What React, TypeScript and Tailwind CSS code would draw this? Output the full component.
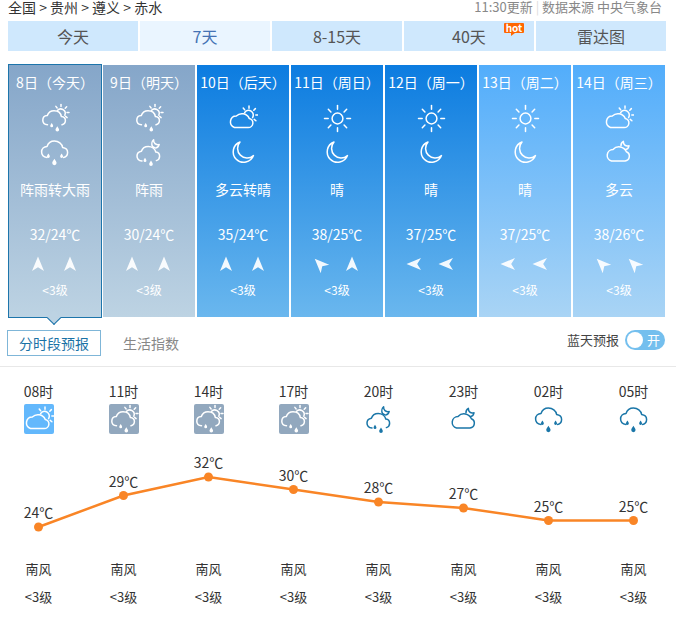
import React from "react";

const FONT = "font-['Noto_Sans_CJK_SC','Liberation_Sans',sans-serif]";

type IconKind = "partly" | "shower" | "showerNight" | "rain" | "sun" | "moon" | "cloudNight";

function Rays({ cx, cy, r1, r2, angles }: { cx: number; cy: number; r1: number; r2: number; angles: number[] }) {
  return (
    <>
      {angles.map((a) => {
        const t = (a * Math.PI) / 180;
        return (
          <line
            key={a}
            x1={cx + r1 * Math.cos(t)}
            y1={cy + r1 * Math.sin(t)}
            x2={cx + r2 * Math.cos(t)}
            y2={cy + r2 * Math.sin(t)}
          />
        );
      })}
    </>
  );
}

function Drop({ x, y, s = 1 }: { x: number; y: number; s?: number }) {
  return (
    <path
      d={`M${x} ${y - 3 * s} C${x + 0.8 * s} ${y - 1.4 * s} ${x + 1.8 * s} ${y - 0.6 * s} ${x + 1.8 * s} ${y + 0.6 * s} A${1.8 * s} ${1.8 * s} 0 0 1 ${x - 1.8 * s} ${y + 0.6 * s} C${x - 1.8 * s} ${y - 0.6 * s} ${x - 0.8 * s} ${y - 1.4 * s} ${x} ${y - 3 * s}Z`}
      fill="currentColor"
      stroke="none"
    />
  );
}

function WeatherIcon({ kind }: { kind: IconKind }) {
  return (
    <svg
      width="30"
      height="30"
      viewBox="0 0 30 30"
      fill="none"
      stroke="currentColor"
      strokeWidth="1.5"
      strokeLinecap="round"
      strokeLinejoin="round"
      className="block shrink-0"
    >
      {kind === "sun" && (
        <>
          <circle cx="15.5" cy="15.5" r="5.4" />
          <Rays cx={15.5} cy={15.5} r1={9.3} r2={13} angles={[0, 45, 90, 135, 180, 225, 270, 315]} />
        </>
      )}
      {kind === "moon" && <path d="M12 5 A10.5 10.5 0 1 0 25.5 18.6 A9.6 9.6 0 0 1 12 5Z" />}
      {kind === "partly" && (
        <>
          <path d="M6.5 24.5 H20 A4.6 4.6 0 0 0 21.2 15.4 A8 8 0 0 0 8.3 13 A5.9 5.9 0 0 0 6.5 24.5Z" />
          <path d="M16.6 9.6 A4.6 4.6 0 0 1 24.6 14.6" />
          <Rays cx={21} cy={12} r1={6.8} r2={9} angles={[-90, -130, -45, 0, 40]} />
        </>
      )}
      {kind === "shower" && (
        <>
          <path d="M7.5 21.8 C4.6 21.6 2.8 19.6 2.8 17.2 C2.8 14.6 4.8 12.8 7.2 12.6 C8.4 9.6 11 7.8 14 7.8 C18 7.8 20.8 10.4 21.4 13.6 C23.8 13.8 25.4 15.6 25.4 17.6 C25.4 19.8 24 21.2 22 21.7" />
          <path d="M17.4 7.6 A4.4 4.4 0 0 1 24.8 12.2" />
          <Rays cx={21} cy={9.5} r1={6} r2={8} angles={[-90, -130, -45, 0, 40]} />
          <Drop x={11.7} y={22.4} s={0.8} />
          <Drop x={17.3} y={26.2} />
        </>
      )}
      {kind === "showerNight" && (
        <>
          <path d="M8 24 C5 23.8 3 21.8 3 19 C3 16.6 4.8 14.6 7.4 14.2 C8.4 11.2 11 9.4 14.2 9.4 C17.8 9.4 21 11.8 21.8 15 C24 15.2 25.6 17 25.6 19.2 C25.6 21.4 24.2 23 22.4 23.6" />
          <path d="M19.6 2.8 C19.4 6 21.6 8.4 25.2 7.4 C24.6 10 22.6 11.2 20.8 10.8 C20 10.6 19 10 18.4 9.4 C17.4 7.4 17.8 4.4 19.6 2.8Z" fill="none" />
          <Drop x={11} y={23.2} s={0.8} />
          <Drop x={17} y={26.6} />
        </>
      )}
      {kind === "rain" && (
        <>
          <path d="M7 20.5 C3.4 20 1.6 17.6 1.6 15 C1.6 11.8 4 9.6 7 9.4 C8.2 6 11 4 14.4 4 C18.6 4 22 6.8 22.6 10.4 C25.6 10.8 27.6 12.8 27.6 15.4 C27.6 18 26 19.8 23.6 20.4" />
          <Drop x={8.4} y={19} s={0.8} />
          <Drop x={21.6} y={19} s={0.8} />
          <Drop x={14.4} y={25.4} s={1.2} />
        </>
      )}
      {kind === "cloudNight" && (
        <>
          <path d="M7.5 24 H21 A4.8 4.8 0 0 0 22.4 14.8 A8 8 0 0 0 9 12.6 A5.8 5.8 0 0 0 7.5 24Z" />
          <path d="M19.4 4.4 C19.2 7.6 21.6 9.8 25 8.8 C24.6 11 23.2 12.2 21.6 12.6 M19.4 4.4 C17.6 5.6 16.8 7.4 17 8.8" />
        </>
      )}
    </svg>
  );
}

function WindArrow({ rot }: { rot: number }) {
  return (
    <svg width="14" height="16" viewBox="0 0 14 16" className="block" style={{ transform: `rotate(${rot}deg)` }}>
      <path d="M7 0.5 L13 15 L7 11.2 L1 15 Z" fill="#ffffff" fillOpacity="0.92" />
    </svg>
  );
}

type Day = {
  date: string;
  i1: IconKind;
  i2: IconKind;
  cond: string;
  temp: string;
  w1: number;
  w2: number;
  bg: string;
  active?: boolean;
};

const GRAY = "bg-[linear-gradient(#85a6c9,#bdd3e3)]";
const BLUE = "bg-[linear-gradient(#0c7ce0,#6ab7ee)]";
const LIGHT = "bg-[linear-gradient(#52adfb,#a9d4f5)]";

const days: Day[] = [
  { date: "8日（今天）", i1: "shower", i2: "rain", cond: "阵雨转大雨", temp: "32/24℃", w1: 0, w2: 0, bg: GRAY, active: true },
  { date: "9日（明天）", i1: "shower", i2: "showerNight", cond: "阵雨", temp: "30/24℃", w1: 0, w2: 0, bg: GRAY },
  { date: "10日（后天）", i1: "partly", i2: "moon", cond: "多云转晴", temp: "35/24℃", w1: 0, w2: 0, bg: BLUE },
  { date: "11日（周日）", i1: "sun", i2: "moon", cond: "晴", temp: "38/25℃", w1: -45, w2: 0, bg: BLUE },
  { date: "12日（周一）", i1: "sun", i2: "moon", cond: "晴", temp: "37/25℃", w1: -90, w2: -90, bg: BLUE },
  { date: "13日（周二）", i1: "sun", i2: "moon", cond: "晴", temp: "37/25℃", w1: -90, w2: -90, bg: LIGHT },
  { date: "14日（周三）", i1: "partly", i2: "cloudNight", cond: "多云", temp: "38/26℃", w1: -45, w2: -45, bg: LIGHT },
];

const tabs = ["今天", "7天", "8-15天", "40天", "雷达图"];

const hours: { t: string; icon: IconKind; box?: string; temp: string; y: number }[] = [
  { t: "08时", icon: "partly", box: "bg-[#63b8fc] text-white", temp: "24℃", y: 87 },
  { t: "11时", icon: "shower", box: "bg-[#92a8be] text-white", temp: "29℃", y: 55.5 },
  { t: "14时", icon: "shower", box: "bg-[#92a8be] text-white", temp: "32℃", y: 37 },
  { t: "17时", icon: "shower", box: "bg-[#92a8be] text-white", temp: "30℃", y: 49.5 },
  { t: "20时", icon: "showerNight", temp: "28℃", y: 62 },
  { t: "23时", icon: "cloudNight", temp: "27℃", y: 68 },
  { t: "02时", icon: "rain", temp: "25℃", y: 80.5 },
  { t: "05时", icon: "rain", temp: "25℃", y: 80.5 },
];

function DayCard({ d }: { d: Day }) {
  return (
    <li
      className={`relative flex flex-col items-center text-white ${d.bg} ${
        d.active ? "w-[94px] h-[254px] -mt-px mr-[-1px] border border-[#1d75ab] pt-0" : "w-[92px] h-[252px]"
      }`}
    >
      <div className="h-[34px] w-full text-center text-[14px] leading-[34px] whitespace-nowrap">{d.date}</div>
      <div className="mt-[4px]">
        <WeatherIcon kind={d.i1} />
      </div>
      <div className="mt-[4px]">
        <WeatherIcon kind={d.i2} />
      </div>
      <div className="mt-[12px] h-[20px] text-[14px] leading-[20px] whitespace-nowrap">{d.cond}</div>
      <div className="mt-[25px] h-[20px] text-[14px] leading-[20px] whitespace-nowrap">{d.temp}</div>
      <div className="mt-[12px] flex h-[16px] w-[46px] justify-between -translate-x-[1px]">
        <WindArrow rot={d.w1} />
        <WindArrow rot={d.w2} />
      </div>
      <div className="mt-[9px] h-[18px] text-[12px] leading-[18px] whitespace-nowrap">&lt;3级</div>
      {d.active && (
        <span className="absolute left-[40px] bottom-[-6px] h-[10px] w-[10px] rotate-45 border-r border-b border-[#1d75ab] bg-[#bdd3e3]" />
      )}
    </li>
  );
}

export default function App() {
  const points = hours.map((h, i) => `${38.5 + i * 85},${h.y}`).join(" ");
  return (
    <div className={`relative h-[628px] w-[676px] overflow-hidden bg-white text-[#333] ${FONT}`}>
      <div className="flex h-[21px] items-start justify-between pl-[8px] pr-[14px]">
        <div className="text-[14px] leading-[14px] whitespace-pre">全国 &gt; 贵州 &gt; 遵义 &gt; 赤水</div>
        <div className="text-[13px] leading-[14px] text-[#888] whitespace-pre">
          11:30更新 <span className="text-[#ddd]">|</span> 数据来源 中央气象台
        </div>
      </div>

      <ul className="flex gap-[2px] pl-[8px]">
        {tabs.map((t, i) => (
          <li
            key={t}
            className={`relative h-[30px] w-[130px] text-center text-[16px] leading-[30px] ${
              i === 1 ? "bg-[#eaf5ff] text-[#4472b4]" : "bg-[#cfe8fd] text-[#555]"
            }`}
          >
            {t}
            {t === "40天" && (
              <span className="absolute left-[100px] top-[2px] h-[10px] w-[20px] rounded-[1px] bg-[#ff6600] text-center text-[10px] font-bold leading-[10px] text-white">
                hot
                <span className="absolute left-[7px] top-[10px] h-0 w-0 border-r-[4px] border-t-[3px] border-r-transparent border-t-[#ff6600]" />
              </span>
            )}
          </li>
        ))}
      </ul>

      <ul className="mt-[14px] flex gap-[2px] pl-[8px]">
        {days.map((d) => (
          <DayCard key={d.date} d={d} />
        ))}
      </ul>

      <div className="mt-[12px] flex h-[37px] items-start justify-between border-b border-[#e8e8e8] pl-[7px] pr-[11px]">
        <div className="flex items-start">
          <div className="h-[26px] w-[94px] border border-[#7fb6d8] text-center text-[14px] leading-[24px] text-[#1a72a6]">
            分时段预报
          </div>
          <div className="ml-[22px] text-[14px] leading-[26px] text-[#888]">生活指数</div>
        </div>
        <div className="flex items-center gap-[6px]">
          <span className="text-[13px] leading-[20px] text-[#444]">蓝天预报</span>
          <div className="flex h-[20px] w-[40px] items-center justify-between rounded-full bg-[#74bfee] pl-[2px] pr-[5px]">
            <span className="h-[16px] w-[16px] rounded-full bg-white" />
            <span className="text-[13px] leading-[20px] text-white">开</span>
          </div>
        </div>
      </div>

      <div className="ml-[-4px] mt-[14px] flex w-[680px]">
        {hours.map((h) => (
          <div key={h.t} className="flex w-[85px] flex-col items-center">
            <div className="h-[20px] text-[14px] leading-[20px] text-[#333]">{h.t}</div>
            <div className={`mt-[3px] h-[30px] w-[30px] rounded-[2px] ${h.box ?? "text-[#1a76a8]"}`}>
              <WeatherIcon kind={h.icon} />
            </div>
          </div>
        ))}
      </div>

      <svg width="676" height="110" viewBox="0 0 676 110" className="mt-[6px] block">
        <polyline points={points} fill="none" stroke="#f98526" strokeWidth="2.5" />
        {hours.map((h, i) => (
          <g key={h.t}>
            <circle cx={38.5 + i * 85} cy={h.y} r="4.5" fill="#f98526" />
            <text x={38.5 + i * 85} y={h.y - 9} textAnchor="middle" fontSize="14" fill="#333">
              {h.temp}
            </text>
          </g>
        ))}
      </svg>

      <div className="ml-[-4px] mt-[9px] flex w-[680px]">
        {hours.map((h) => (
          <div key={h.t} className="flex w-[85px] flex-col items-center text-[#333]">
            <div className="h-[28px] text-[13px] leading-[20px]">南风</div>
            <div className="text-[13px] leading-[20px]">&lt;3级</div>
          </div>
        ))}
      </div>
    </div>
  );
}
